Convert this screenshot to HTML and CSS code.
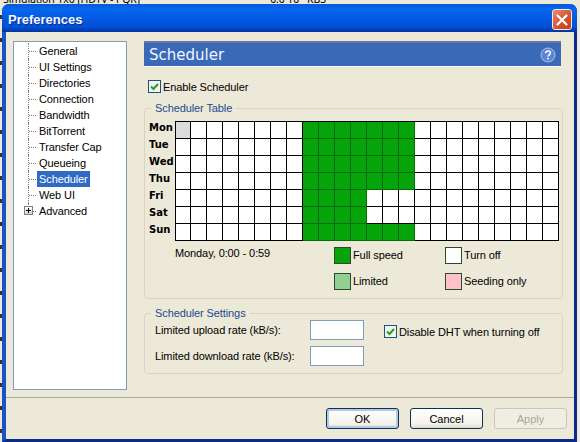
FILE: index.html
```html
<!DOCTYPE html>
<html lang="en">
<head>
    <meta charset="UTF-8">
    <title>Preferences</title>
    <link rel="stylesheet" href="styles.css">
</head>
<body>
    <div class="backdrop-top">
        <span class="backdrop-name">Simulation 1x0 [HDTV - PQR]</span>
        <span class="backdrop-size">0.0 10 &nbsp; KB3</span>
    </div>
    <div class="desktop">
        <div class="backdrop-left"></div>
        <div class="window">
            <header class="titlebar">
                <h1>Preferences</h1>
                <button type="button" class="close" aria-label="Close">
                    <svg width="12" height="12" viewBox="0 0 12 12"><path d="M1.5 1.5L10.5 10.5M10.5 1.5L1.5 10.5" stroke="#fff" stroke-width="2.2" stroke-linecap="round"/></svg>
                </button>
            </header>

            <div class="content">
                <nav class="tree">
                    <div class="tree-item"><span class="branch"></span><span class="tree-label">General</span></div>
                    <div class="tree-item"><span class="branch"></span><span class="tree-label">UI Settings</span></div>
                    <div class="tree-item"><span class="branch"></span><span class="tree-label">Directories</span></div>
                    <div class="tree-item"><span class="branch"></span><span class="tree-label">Connection</span></div>
                    <div class="tree-item"><span class="branch"></span><span class="tree-label">Bandwidth</span></div>
                    <div class="tree-item"><span class="branch"></span><span class="tree-label">BitTorrent</span></div>
                    <div class="tree-item"><span class="branch"></span><span class="tree-label">Transfer Cap</span></div>
                    <div class="tree-item"><span class="branch"></span><span class="tree-label">Queueing</span></div>
                    <div class="tree-item"><span class="branch"></span><span class="tree-label selected">Scheduler</span></div>
                    <div class="tree-item"><span class="branch"></span><span class="tree-label">Web UI</span></div>
                    <div class="tree-item"><span class="branch last"><span class="plus"></span></span><span class="tree-label">Advanced</span></div>
                </nav>

                <main class="panel">
                    <div class="panel-header">
                        <h2>Scheduler</h2>
                        <svg class="help" width="16" height="16" viewBox="0 0 16 16">
                            <circle cx="8" cy="8" r="7" fill="#5b86cf" stroke="#a9c2ea"/>
                            <path d="M5.6 6.2C5.7 4.7 6.8 4 8 4c1.400 0 2.400.8 2.400 2 0 1.800-2.400 1.800-2.400 3.600" fill="none" stroke="#fff" stroke-width="1.500"/>
                            <rect x="7.200" y="10.800" width="1.600" height="1.600" fill="#fff"/>
                        </svg>
                    </div>

                    <label class="check enable">
                        <span class="box"><svg width="11" height="11" viewBox="0 0 11 11"><path d="M2 5.500L4.500 8L9 3" fill="none" stroke="#21a121" stroke-width="2"/></svg></span>
                        Enable Scheduler
                    </label>

                    <fieldset class="group table-group">
                        <legend>Scheduler Table</legend>
                        <div class="schedule">
                            <div class="days">
                                <span>Mon</span><span>Tue</span><span>Wed</span><span>Thu</span><span>Fri</span><span>Sat</span><span>Sun</span>
                            </div>
                            <div class="grid" id="grid"></div>
                        </div>
                        <div class="below">
                            <div class="current">Monday, 0:00 - 0:59</div>
                            <div class="legend-grid">
                                <div class="key"><span class="swatch full"></span>Full speed</div>
                                <div class="key"><span class="swatch off"></span>Turn off</div>
                                <div class="key"><span class="swatch limited"></span>Limited</div>
                                <div class="key"><span class="swatch seeding"></span>Seeding only</div>
                            </div>
                        </div>
                    </fieldset>

                    <fieldset class="group settings-group">
                        <legend>Scheduler Settings</legend>
                        <div class="rates">
                            <label class="rate"><span>Limited upload rate (kB/s):</span><input type="text"></label>
                            <label class="rate"><span>Limited download rate (kB/s):</span><input type="text"></label>
                        </div>
                        <label class="check dht">
                            <span class="box"><svg width="11" height="11" viewBox="0 0 11 11"><path d="M2 5.500L4.500 8L9 3" fill="none" stroke="#21a121" stroke-width="2"/></svg></span>
                            Disable DHT when turning off
                        </label>
                    </fieldset>
                </main>
            </div>

            <footer class="buttons">
                <button type="button" class="btn default">OK</button>
                <button type="button" class="btn">Cancel</button>
                <button type="button" class="btn" disabled>Apply</button>
            </footer>
        </div>
    </div>
    <script src="script.js"></script>
</body>
</html>
```

FILE: styles.css
```css
* {
    box-sizing: border-box;
}
html, body {
    height: 100%;
}
body {
    font-family: "Liberation Sans", Arial, sans-serif;
    font-size: 11px;
    letter-spacing: -0.1px;
    background-color: #ece9d8;
    color: black;
    margin: 0;
    padding: 0;
    overflow: hidden;
}
.backdrop-top {
    height: 4px;
    overflow: hidden;
    display: flex;
    line-height: 10px;
    padding-left: 3px;
    font-family: "Noto Sans", sans-serif;
    font-size: 10.5px;
}
.backdrop-top span {
    margin-top: -6px;
}
.backdrop-size {
    margin-left: 130px;
}
.desktop {
    display: flex;
}
/* bits of the window behind, only the edge of it shows */
.backdrop-left {
    width: 2px;
    height: 438px;
    background: repeating-linear-gradient(transparent 0, transparent 11px, #333 11px, #333 15px, transparent 15px, transparent 23px);
}
.window {
    width: 575px;
    height: 438px;
    display: flex;
    flex-direction: column;
    background-color: #ece9d8;
    border-left: 4px solid #1a52c8;
    border-right: 3px solid #0a2a8c;
    border-bottom: 3px solid #0a2a8c;
    border-radius: 7px 7px 0 0;
}
.titlebar {
    height: 28px;
    margin-left: -4px;
    margin-right: -3px;
    padding: 3px 5px 0 6px;
    display: flex;
    align-items: center;
    justify-content: space-between;
    border-radius: 7px 7px 0 0;
    background: linear-gradient(#0a58dc 0%, #0566ee 18%, #0358e0 55%, #0250d6 82%, #02349e 100%);
}
.titlebar h1 {
    margin: 0;
    font-family: "Liberation Sans", Arial, sans-serif;
    font-size: 13px;
    font-weight: bold;
    letter-spacing: 0;
    color: #f4f8ff;
    text-shadow: 1px 1px 0 #0a2f9c;
}
.close {
    width: 20px;
    height: 21px;
    padding: 0;
    display: flex;
    align-items: center;
    justify-content: center;
    border: 1px solid #f0e8e4;
    border-radius: 3px;
    background: linear-gradient(135deg, #e58c6e, #d5502a 60%, #c2401c);
}
.content {
    flex: 1;
    display: flex;
    min-height: 0;
    padding: 9px 0 0 7px;
}
.tree {
    width: 114px;
    height: 349px;
    padding: 1px 0 0 14px;
    background-color: white;
    border: 1px solid #7f9db9;
}
.tree-item {
    height: 16px;
    display: flex;
    align-items: center;
}
.branch {
    position: relative;
    width: 9px;
    height: 16px;
    border-left: 1px dotted #808080;
}
.branch::after {
    content: "";
    position: absolute;
    left: 0;
    right: 1px;
    top: 8px;
    border-top: 1px dotted #808080;
}
.branch.last {
    height: 8px;
    align-self: flex-start;
}
.plus {
    position: absolute;
    z-index: 1;
    left: -5px;
    top: 3px;
    width: 9px;
    height: 9px;
    border: 1px solid #808080;
    background: linear-gradient(#fff, #d8d4c4);
}
.plus::before, .plus::after {
    content: "";
    position: absolute;
    background-color: black;
}
.plus::before {
    left: 1px;
    top: 3px;
    width: 5px;
    height: 1px;
}
.plus::after {
    left: 3px;
    top: 1px;
    width: 1px;
    height: 5px;
}
.tree-label {
    padding: 1px 2px;
    line-height: 14px;
}
.tree-label.selected {
    background-color: #316ac5;
    color: white;
}
.panel {
    width: 419px;
    margin-left: 17px;
}
.panel-header {
    width: 417px;
    height: 25px;
    padding: 1px 5px 0 5px;
    display: flex;
    align-items: center;
    justify-content: space-between;
    background-color: #3a69b8;
    border-top: 2px solid #667c9e;
    box-shadow: 0 1px 0 white;
}
.panel-header h2 {
    margin: 0;
    font-family: "DejaVu Sans", sans-serif;
    font-size: 15px;
    font-weight: normal;
    letter-spacing: 0;
    color: #f0f6ff;
}
.help {
    display: block;
}
.check {
    display: flex;
    align-items: center;
    gap: 2px;
}
.box {
    width: 13px;
    height: 13px;
    display: flex;
    align-items: center;
    justify-content: center;
    background-color: #f4f4ee;
    border: 1px solid #1c5180;
}
.enable {
    margin: 14px 0 0 4px;
    height: 13px;
}
.group {
    margin: 0;
    padding: 0;
    min-width: 0;
    border: 1px solid #d8d4c4;
    border-radius: 4px;
}
.group legend {
    padding: 0 4px;
    color: #1c4a90;
    line-height: 13px;
}
.table-group {
    margin-top: 9px;
    width: 419px;
    height: 197px;
    padding: 6px 0 0 4px;
}
.table-group legend {
    margin-left: 2px;
}
.schedule {
    display: flex;
}
.days {
    width: 26px;
    display: flex;
    flex-direction: column;
    padding-top: 1px;
    font-family: "DejaVu Sans", sans-serif;
    font-size: 10px;
    font-weight: bold;
    letter-spacing: 0;
}
.days span {
    height: 17px;
    line-height: 11px;
}
.grid {
    display: grid;
    grid-template-columns: 15px repeat(23, 16px);
    grid-auto-rows: 17px;
    width: 384px;
    border-top: 1px solid black;
    border-left: 1px solid black;
}
.cell {
    background-color: white;
    border-right: 1px solid black;
    border-bottom: 1px solid black;
}
.cell.on {
    background-color: #07a30b;
    border-color: #056e08;
}
.cell.current-cell {
    background-color: #dcdcdc;
}
.below {
    display: flex;
    padding: 6px 0 0 26px;
}
.current {
    width: 159px;
}
.legend-grid {
    display: grid;
    grid-template-columns: 111px 111px;
    grid-auto-rows: 26px;
}
.key {
    display: flex;
    gap: 2px;
    align-items: flex-start;
    line-height: 16px;
}
.swatch {
    width: 17px;
    height: 17px;
    border: 1px solid #2c4a2c;
}
.swatch.full {
    background-color: #07a30b;
}
.swatch.limited {
    background-color: #90d090;
}
.swatch.off {
    background-color: white;
}
.swatch.seeding {
    background-color: #ffc0c8;
}
.settings-group {
    margin-top: 8px;
    width: 419px;
    height: 67px;
    padding: 0 0 0 10px;
    display: flex;
}
.settings-group legend {
    margin-left: -4px;
}
.rates {
    width: 229px;
    display: flex;
    flex-direction: column;
    gap: 6px;
}
.rate {
    display: flex;
    align-items: center;
    justify-content: space-between;
    width: 209px;
    height: 20px;
}
.rate input {
    width: 54px;
    height: 20px;
    padding: 0;
    background-color: white;
    border: 1px solid #7f9db9;
}
.dht {
    display: flex;
    height: 13px;
    margin-top: 5px;
}
.buttons {
    height: 42px;
    display: flex;
    justify-content: flex-end;
    gap: 11px;
    padding: 10px 7px 0 0;
    border-top: 1px solid #aca899;
}
.btn {
    width: 73px;
    height: 21px;
    padding: 0;
    font: inherit;
    color: black;
    background: linear-gradient(#ffffff, #f4f2e8 80%, #dcd8c8);
    border: 1px solid #0f3050;
    border-radius: 3px;
}
.btn.default {
    box-shadow: inset 0 0 0 2px #b6c8ea;
}
.btn:disabled {
    color: #a9a797;
    background: #f0eee2;
    border-color: #c9c7ba;
}
```

FILE: script.js
```js
// 24 hours per row, x = full speed
const rows = [
    '........xxxxxxx.........',
    '........xxxxxxx.........',
    '........xxxxxxx.........',
    '........xxxxxxx.........',
    '........xxxx............',
    '........xxxx............',
    '........xxxxxxx.........'
];

const grid = document.getElementById('grid');
rows.forEach((row, r) => {
    row.split('').forEach((hour, h) => {
        const cell = document.createElement('span');
        cell.className = 'cell';
        if (hour === 'x') cell.classList.add('on');
        if (r === 0 && h === 0) cell.classList.add('current-cell');
        grid.appendChild(cell);
    });
});
```
